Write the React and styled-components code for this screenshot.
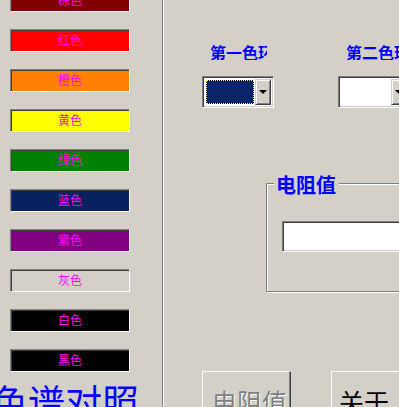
import styled, { createGlobalStyle } from 'styled-components';

const GlobalStyle = createGlobalStyle`
  html, body {
    margin: 0;
    padding: 0;
    background: #d4d0c8;
    overflow: hidden;
  }
  * { box-sizing: border-box; }
`;

const CJK = `"Noto Sans CJK SC", "Noto Sans", sans-serif`;

const colors = [
  { name: '棕色', bg: '#800000' },
  { name: '红色', bg: '#ff0000' },
  { name: '橙色', bg: '#ff8000' },
  { name: '黄色', bg: '#ffff00' },
  { name: '绿色', bg: '#008000' },
  { name: '蓝色', bg: '#08215f' },
  { name: '紫色', bg: '#800080' },
  { name: '灰色', bg: '#d4d0c8' },
  { name: '白色', bg: '#000000' },
  { name: '黑色', bg: '#000000' },
];

const Window = styled.div`
  display: flex;
  width: 399px;
  height: 407px;
  overflow: hidden;
  font-family: ${CJK};
`;

const LeftPanel = styled.div`
  width: 162px;
  flex-shrink: 0;
  display: flex;
  flex-direction: column;
  padding-left: 10px;
`;

const ColorList = styled.div`
  display: flex;
  flex-direction: column;
  gap: 17px;
  margin-top: -11px;
`;

const ColorButton = styled.div`
  width: 120px;
  height: 23px;
  background: ${p => p.$bg};
  border: 1px solid;
  border-color: #808080 #ffffff #ffffff #808080;
  box-shadow: inset 1px 1px #404040;
  color: #ff00ff;
  font-size: 12px;
  line-height: 20px;
  text-align: center;
`;

const Title = styled.div`
  margin-top: 11px;
  margin-left: -19px;
  white-space: nowrap;
  color: #0000ff;
  font-size: 37px;
  line-height: 37px;
`;

const Separator = styled.div`
  width: 2px;
  flex-shrink: 0;
  border-left: 1px solid #808080;
  border-right: 1px solid #ffffff;
`;

const RightPanel = styled.div`
  flex: 1;
  min-width: 0;
  display: flex;
  flex-direction: column;
  padding-left: 38px;
  overflow: hidden;
`;

const ComboRow = styled.div`
  display: flex;
  gap: 64px;
  margin-top: 44px;
`;

const ComboColumn = styled.div`
  display: flex;
  flex-direction: column;
  flex-shrink: 0;
  gap: 16px;
`;

const Label = styled.div`
  width: 57px;
  margin-left: 8px;
  overflow: hidden;
  white-space: nowrap;
  color: #0000ff;
  font-size: 16px;
  font-weight: 700;
  line-height: 16px;
`;

const Combo = styled.div`
  width: 72px;
  height: 32px;
  display: flex;
  background: #ffffff;
  border: 1px solid;
  border-color: #808080 #ffffff #ffffff #808080;
  box-shadow: inset 1px 1px #404040, inset -1px -1px #d4d0c8;
  padding: 2px 2px 2px 3px;
`;

const ComboField = styled.div`
  flex: 1;
  margin: 1px 1px 1px 0;
  background: ${p => p.$fill};
  ${p => p.$focused && `
    box-shadow: inset 0 0 0 1px #000;
    outline: 1px dotted #ffff60;
    outline-offset: -1px;
  `}
`;

const DropButton = styled.div`
  width: 16px;
  display: flex;
  align-items: center;
  justify-content: center;
  background: #d4d0c8;
  border: 1px solid;
  border-color: #d4d0c8 #404040 #404040 #d4d0c8;
  box-shadow: inset 1px 1px #ffffff, inset -1px -1px #808080;

  &::after {
    content: '';
    border-left: 4px solid transparent;
    border-right: 4px solid transparent;
    border-top: 4px solid #000;
  }
`;

const GroupBox = styled.div`
  position: relative;
  width: 220px;
  height: 109px;
  margin-top: 75px;
  margin-left: 64px;
  flex-shrink: 0;
  border: 1px solid #808080;
  box-shadow: inset 1px 1px #ffffff, 1px 1px #ffffff;
  padding: 37px 0 0 15px;
`;

const GroupLabel = styled.div`
  position: absolute;
  top: -10px;
  left: 7px;
  padding: 0 3px 0 2px;
  background: #d4d0c8;
  color: #0000ff;
  font-size: 20px;
  font-weight: 700;
  line-height: 22px;
`;

const TextInput = styled.div`
  width: 200px;
  height: 31px;
  background: #ffffff;
  border: 1px solid;
  border-color: #808080 #ffffff #ffffff #808080;
  box-shadow: inset 1px 1px #404040, inset -1px -1px #d4d0c8;
`;

const ButtonRow = styled.div`
  display: flex;
  gap: 40px;
  margin-top: 79px;
`;

const Button = styled.div`
  flex-shrink: 0;
  width: ${p => p.$w}px;
  height: 50px;
  padding: 14px 0 0 ${p => p.$pad}px;
  background: #d4d0c8;
  border: 1px solid;
  border-color: #ffffff #404040 #404040 #ffffff;
  box-shadow: inset -1px -1px #808080;
  font-size: 25px;
  line-height: 30px;
  white-space: nowrap;
  overflow: hidden;
  color: ${p => (p.$disabled ? '#808080' : '#000000')};
  text-shadow: ${p => (p.$disabled ? '1px 1px #ffffff' : 'none')};
`;

export default function App() {
  return (
    <Window>
      <GlobalStyle />
      <LeftPanel>
        <ColorList>
          {colors.map(c => (
            <ColorButton key={c.name} $bg={c.bg}>{c.name}</ColorButton>
          ))}
        </ColorList>
        <Title>色谱对照</Title>
      </LeftPanel>
      <Separator />
      <RightPanel>
        <ComboRow>
          <ComboColumn>
            <Label>第一色环</Label>
            <Combo>
              <ComboField $fill="#0a246a" $focused />
              <DropButton />
            </Combo>
          </ComboColumn>
          <ComboColumn>
            <Label>第二色环</Label>
            <Combo>
              <ComboField $fill="#ffffff" />
              <DropButton />
            </Combo>
          </ComboColumn>
        </ComboRow>
        <GroupBox>
          <GroupLabel>电阻值</GroupLabel>
          <TextInput />
        </GroupBox>
        <ButtonRow>
          <Button $w={89} $pad={9} $disabled>电阻值</Button>
          <Button $w={120} $pad={7}>关于...</Button>
        </ButtonRow>
      </RightPanel>
    </Window>
  );
}
